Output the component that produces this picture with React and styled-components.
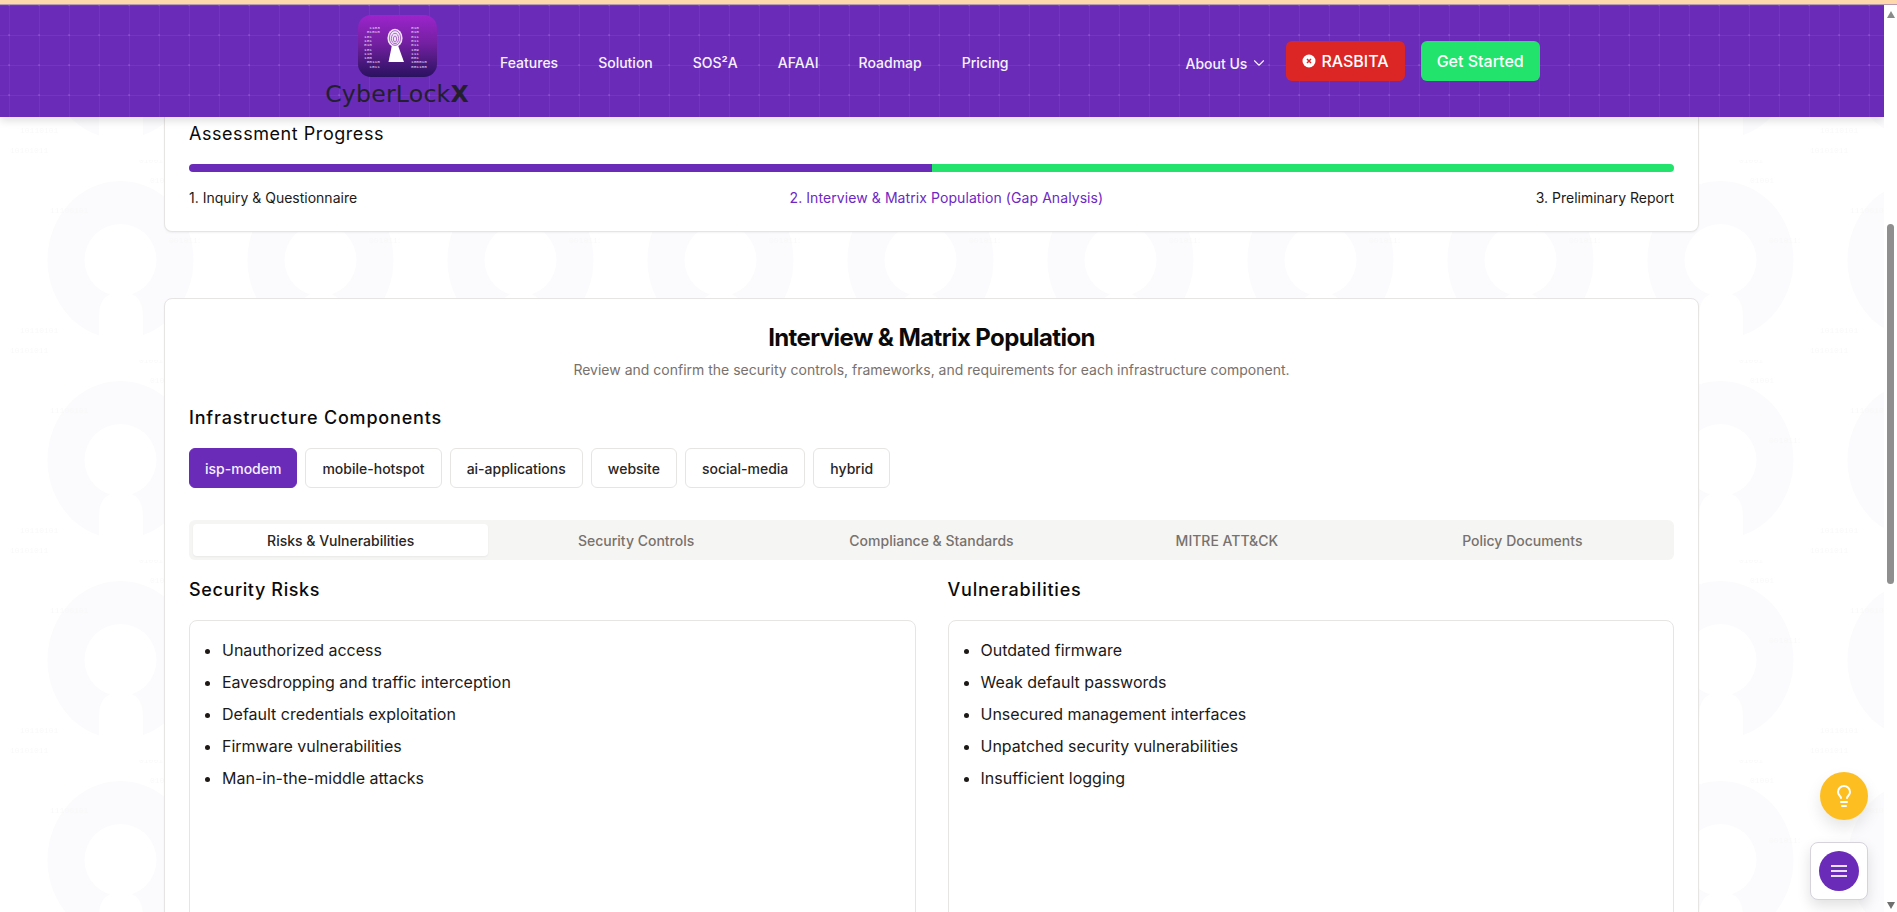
import React from "react";
import styled, { createGlobalStyle } from "styled-components";
import { ChevronDown, Lightbulb } from "lucide-react";

const Global = createGlobalStyle`
  html, body { margin: 0; padding: 0; height: 100%; overflow: hidden; background: #fff; }
  body { font-family: Inter, "Liberation Sans", sans-serif; color: #0c0a09; }
  * { box-sizing: border-box; }
`;

const PURPLE = "#6a2bb9";
const Page = styled.div`
  position: relative;
  height: 912px;
  width: 1897px;
  overflow: hidden;
  display: flex;
  flex-direction: column;
`;
const Stripe = styled.div`
  position: relative;
  z-index: 5;
  height: 5px;
  flex: none;
  background: #fed7aa;
  border-bottom: 1px solid #b79ab0;
`;
const Body = styled.div`
  flex: 1;
  display: flex;
  min-height: 0;
`;
const Viewport = styled.div`
  position: relative;
  flex: 1;
  min-width: 0;
  display: flex;
  flex-direction: column;
`;
const Backdrop = styled.svg`
  position: absolute;
  inset: -5px 0 0 0;
  width: 100%;
  height: 912px;
  z-index: 0;
`;
const Header = styled.header`
  position: relative;
  z-index: 2;
  height: 112px;
  flex: none;
  padding-left: 326px;
  display: flex;
  align-items: flex-start;
  background-color: ${PURPLE};
  background-image:
    radial-gradient(circle, rgba(255, 255, 255, 0.1) 1px, transparent 1.6px),
    linear-gradient(rgba(255, 255, 255, 0.06) 1px, transparent 1px),
    linear-gradient(90deg, rgba(255, 255, 255, 0.05) 1px, transparent 1px);
  background-size: 30px 30px;
  background-position: -6px -15px, 9px 0, 9px 0;
  box-shadow: 0 4px 8px rgba(0, 0, 0, 0.12);
`;
const Brand = styled.div`
  width: 142px;
  flex: none;
  padding-top: 10px;
  display: flex;
  flex-direction: column;
  align-items: center;
`;
const BrandName = styled.div`
  font-family: "DejaVu Sans", sans-serif;
  font-size: 23.6px;
  line-height: 24px;
  letter-spacing: 0.2px;
  white-space: nowrap;
  color: #231f2c;
  margin-top: 5px;
  b { font-weight: 700; }
`;
const Nav = styled.nav`
  display: flex;
  gap: 40px;
  margin-left: 32px;
  height: 32px;
  margin-top: 41px;
  align-items: center;
`;
const NavLink = styled.span`
  font-size: 14px;
  font-weight: 500;
  color: #f6f2fc;
  white-space: nowrap;
`;
const About = styled(NavLink)`
  display: flex;
  align-items: center;
  gap: 3px;
  margin-left: 177px;
  margin-top: 43px;
  height: 30px;
  margin-right: 18px;
`;
const Action = styled.button`
  height: 40px;
  margin-top: 36px;
  margin-right: 16px;
  padding: 0 16px;
  border: 0;
  border-radius: 6px;
  display: flex;
  align-items: center;
  gap: 5px;
  font: 500 16px Inter, sans-serif;
  color: #fff;
  background: ${(p) => (p.$red ? "#dc2626" : "#22e36c")};
`;
const Main = styled.main`
  position: relative;
  z-index: 1;
  flex: 1;
  min-height: 0;
  overflow: hidden;
  padding-left: 164px;
`;
const Card = styled.section`
  width: 1535px;
  background: #fff;
  border: 1px solid #e7e5e4;
  border-radius: 8px;
  padding: 0 24px;
  box-shadow: 0 1px 2px rgba(0, 0, 0, 0.05);
`;
const ProgressCard = styled(Card)`
  height: 115px;
  border-top: 0;
  border-top-left-radius: 0;
  border-top-right-radius: 0;
  padding-top: 3px;
`;
const MatrixCard = styled(Card)`
  margin-top: 66px;
  height: 700px;
  padding-top: 23px;
`;
const SectionTitle = styled.h3`
  margin: 0;
  font-size: 18px;
  line-height: 28px;
  font-weight: ${(p) => p.$weight || 500};
  letter-spacing: ${(p) => p.$spacing || "0.62px"};
  color: #0c0a09;
`;
const Bar = styled.div`
  display: flex;
  height: 8px;
  margin-top: 16px;
  border-radius: 4px;
  overflow: hidden;
`;
const BarPart = styled.div`
  flex: 1;
  background: ${(p) => p.$color};
`;
const Steps = styled.div`
  display: flex;
  justify-content: space-between;
  margin-top: 16px;
  font-size: 14px;
  line-height: 20px;
`;
const Step = styled.span`
  color: ${(p) => (p.$active ? "#6d28c4" : "#1c1917")};
  letter-spacing: ${(p) => (p.$active ? "0.08px" : "0")};
`;
const Title = styled.h2`
  margin: 0;
  text-align: center;
  font-size: 24px;
  line-height: 32px;
  font-weight: 700;
  letter-spacing: -0.6px;
`;
const Sub = styled.p`
  margin: 6px 0 0;
  text-align: center;
  font-size: 14px;
  line-height: 20px;
  color: #78716c;
`;
const ComponentsTitle = styled(SectionTitle)`
  margin-top: 24px;
`;
const Chips = styled.div`
  display: flex;
  gap: 8px;
  margin-top: 16px;
`;
const Chip = styled.button`
  height: 40px;
  padding: 0 ${(p) => (p.$active ? 15 : 16)}px;
  border-radius: 6px;
  font: 500 14px Inter, sans-serif;
  color: ${(p) => (p.$active ? "#f6f0ff" : "#292524")};
  background: ${(p) => (p.$active ? PURPLE : "#fff")};
  border: 1px solid ${(p) => (p.$active ? PURPLE : "#e7e5e4")};
`;
const Tabs = styled.div`
  display: grid;
  grid-template-columns: repeat(5, 1fr);
  height: 40px;
  margin-top: 32px;
  padding: 4px;
  border-radius: 6px;
  background: #f5f5f4;
`;
const Tab = styled.div`
  display: flex;
  align-items: center;
  justify-content: center;
  border-radius: 4px;
  font-size: 14px;
  font-weight: 500;
  color: ${(p) => (p.$active ? "#292524" : "#78716c")};
  background: ${(p) => (p.$active ? "#fff" : "transparent")};
  box-shadow: ${(p) => (p.$active ? "0 1px 2px rgba(0,0,0,.05)" : "none")};
`;
const Columns = styled.div`
  display: grid;
  grid-template-columns: 1fr 1fr;
  gap: 32px;
  margin-top: 16px;
`;
const Panel = styled.div`
  margin-top: 16px;
  height: 400px;
  border: 1px solid #e7e5e4;
  border-radius: 8px;
  padding: 17px 16px 16px;
`;
const Bullets = styled.ul`
  margin: 0;
  padding: 0 0 0 16px;
  list-style: disc;
`;
const Bullet = styled.li`
  font-size: 16px;
  line-height: 24px;
  margin-bottom: 8px;
  color: #1c1917;
`;
const Track = styled.div`
  width: 13px;
  flex: none;
  background: #fff;
  position: relative;
  z-index: 3;
  display: flex;
  flex-direction: column;
  align-items: center;
  justify-content: space-between;
  padding: 6px 0 3px;
`;
const Arrow = styled.div`
  width: 0;
  height: 0;
  border-left: 4.5px solid transparent;
  border-right: 4.5px solid transparent;
  ${(p) => (p.$up ? "border-bottom: 7px solid #8a8a8a;" : "border-top: 7px solid #6f6f6f;")}
`;
const Thumb = styled.div`
  position: absolute;
  top: 219px;
  left: 3px;
  width: 7px;
  height: 360px;
  border-radius: 4px;
  background: #8f8f8f;
`;
const Bulb = styled.button`
  position: absolute;
  left: 1820px;
  top: 772px;
  z-index: 4;
  width: 48px;
  height: 48px;
  border: 0;
  border-radius: 50%;
  background: #fdbe21;
  color: #fff;
  display: flex;
  align-items: center;
  justify-content: center;
  box-shadow: 0 8px 16px rgba(0, 0, 0, 0.1);
`;
const MenuBox = styled.div`
  position: absolute;
  left: 1810px;
  top: 842px;
  z-index: 4;
  width: 58px;
  height: 58px;
  border-radius: 8px;
  background: #fff;
  border: 1px solid #d6d3dc;
  display: flex;
  align-items: center;
  justify-content: center;
  box-shadow: 0 6px 14px rgba(0, 0, 0, 0.12);
`;
const MenuDot = styled.div`
  width: 40px;
  height: 40px;
  border-radius: 50%;
  background: ${PURPLE};
  color: #e9dff8;
  display: flex;
  align-items: center;
  justify-content: center;
`;

const leftBits = ["  1103", " 01010", "101", "101", "010", "101", "110", "100", " 00110", "  1011"];
const rightBits = ["010", "010", "011", "011", "011", "109", "111", "001", "100010", "001100"];

function LogoMark() {
  return (
    <svg width="79" height="62" viewBox="0 0 79 62">
      <defs>
        <linearGradient id="logoFill" x1="0" y1="0" x2="0" y2="1">
          <stop offset="0" stopColor="#9c24cc" />
          <stop offset="0.45" stopColor="#7420a2" />
          <stop offset="1" stopColor="#2a1260" />
        </linearGradient>
      </defs>
      <rect width="79" height="62" rx="13" fill="url(#logoFill)" />
      <g fontFamily="Liberation Mono, monospace" fontSize="4.4" fill="#ead9f5">
        {leftBits.map((b, i) => (
          <text key={i} x="6" y={14 + i * 4.3} xmlSpace="preserve">{b}</text>
        ))}
        {rightBits.map((b, i) => (
          <text key={i} x="53" y={14 + i * 4.3}>{b}</text>
        ))}
      </g>
      <ellipse cx="37" cy="23" rx="7.6" ry="9.2" fill="#f1e4f7" />
      <g fill="none" stroke="#8d3ab4" strokeWidth="0.7">
        <ellipse cx="37" cy="23" rx="5.6" ry="7.4" />
        <ellipse cx="37" cy="23.5" rx="3.6" ry="5.2" />
        <ellipse cx="37" cy="24" rx="1.6" ry="3" />
      </g>
      <path d="M33.8 31 H40.2 L46 47 H30.5 Z" fill="#fff" />
    </svg>
  );
}

function StopIcon() {
  return (
    <svg width="14" height="14" viewBox="0 0 14 14">
      <circle cx="7" cy="7" r="6.5" fill="#fff" />
      <path d="M5 5 L9 9 M9 5 L5 9" stroke="#dc2626" strokeWidth="1.5" />
    </svg>
  );
}

function MenuGlyph() {
  return (
    <svg width="16" height="14" viewBox="0 0 16 14">
      <path d="M0 2 H16 M0 7 H16 M0 12 H16" stroke="currentColor" strokeWidth="1.8" />
    </svg>
  );
}

const binaryRows = [
  ["10101011", 10, 193],
  ["11100101", 50, 53],
  ["00101110", 169, 83],
  ["10110101", 20, 173],
  ["01001", 139, 3],
  ["01001", 150, 23],
];

function PatternBackdrop() {
  return (
    <Backdrop aria-hidden="true">
      <defs>
        <pattern id="keys" width="200" height="200" patternUnits="userSpaceOnUse" patternTransform="translate(0 -40)">
          <path
            fill="#fbfbfd"
            fillRule="evenodd"
            d="M47.5 100 A73 79 0 1 1 193.5 100 A73 79 0 1 1 47.5 100 Z M84.5 100 A36 36 0 1 0 156.5 100 A36 36 0 1 0 84.5 100 Z"
          />
          <path d="M99 200 V156 Q99 132 121 132 Q143 132 143 156 V200 Z" fill="#fff" />
          <g fontFamily="Liberation Mono, monospace" fontSize="8" fill="#f9f9fa">
            {binaryRows.map(([t, x, y], i) => (
              <text key={i} x={x} y={y}>{t}</text>
            ))}
          </g>
        </pattern>
      </defs>
      <rect width="100%" height="100%" fill="url(#keys)" />
    </Backdrop>
  );
}

const chips = ["isp-modem", "mobile-hotspot", "ai-applications", "website", "social-media", "hybrid"];
const tabs = ["Risks & Vulnerabilities", "Security Controls", "Compliance & Standards", "MITRE ATT&CK", "Policy Documents"];
const risks = ["Unauthorized access", "Eavesdropping and traffic interception", "Default credentials exploitation", "Firmware vulnerabilities", "Man-in-the-middle attacks"];
const vulns = ["Outdated firmware", "Weak default passwords", "Unsecured management interfaces", "Unpatched security vulnerabilities", "Insufficient logging"];

export default function App() {
  return (
    <Page>
      <Global />
      <Stripe />
      <Body>
        <Viewport>
          <PatternBackdrop />
          <Header>
            <Brand>
              <LogoMark />
              <BrandName>CyberLock<b>X</b></BrandName>
            </Brand>
            <Nav>
              <NavLink>Features</NavLink>
              <NavLink>Solution</NavLink>
              <NavLink>SOS²A</NavLink>
              <NavLink>AFAAI</NavLink>
              <NavLink>Roadmap</NavLink>
              <NavLink>Pricing</NavLink>
            </Nav>
            <About>About Us <ChevronDown size={18} strokeWidth={1.5} /></About>
            <Action $red><StopIcon /> RASBITA</Action>
            <Action>Get Started</Action>
          </Header>
          <Main>
            <ProgressCard>
              <SectionTitle $weight={400} $spacing="0.55px">Assessment Progress</SectionTitle>
              <Bar>
                <BarPart $color={PURPLE} />
                <BarPart $color="#22e36c" />
              </Bar>
              <Steps>
                <Step>1. Inquiry &amp; Questionnaire</Step>
                <Step $active>2. Interview &amp; Matrix Population (Gap Analysis)</Step>
                <Step>3. Preliminary Report</Step>
              </Steps>
            </ProgressCard>
            <MatrixCard>
              <Title>Interview &amp; Matrix Population</Title>
              <Sub>Review and confirm the security controls, frameworks, and requirements for each infrastructure component.</Sub>
              <ComponentsTitle $spacing="0.82px">Infrastructure Components</ComponentsTitle>
              <Chips>
                {chips.map((c, i) => <Chip key={c} $active={i === 0}>{c}</Chip>)}
              </Chips>
              <Tabs>
                {tabs.map((t, i) => <Tab key={t} $active={i === 0}>{t}</Tab>)}
              </Tabs>
              <Columns>
                <div>
                  <SectionTitle>Security Risks</SectionTitle>
                  <Panel>
                    <Bullets>{risks.map((r) => <Bullet key={r}>{r}</Bullet>)}</Bullets>
                  </Panel>
                </div>
                <div>
                  <SectionTitle $spacing="0.78px">Vulnerabilities</SectionTitle>
                  <Panel>
                    <Bullets>{vulns.map((r) => <Bullet key={r}>{r}</Bullet>)}</Bullets>
                  </Panel>
                </div>
              </Columns>
            </MatrixCard>
          </Main>
        </Viewport>
        <Track>
          <Arrow $up />
          <Thumb />
          <Arrow />
        </Track>
      </Body>
      <Bulb><Lightbulb size={24} strokeWidth={2} /></Bulb>
      <MenuBox><MenuDot><MenuGlyph /></MenuDot></MenuBox>
    </Page>
  );
}
